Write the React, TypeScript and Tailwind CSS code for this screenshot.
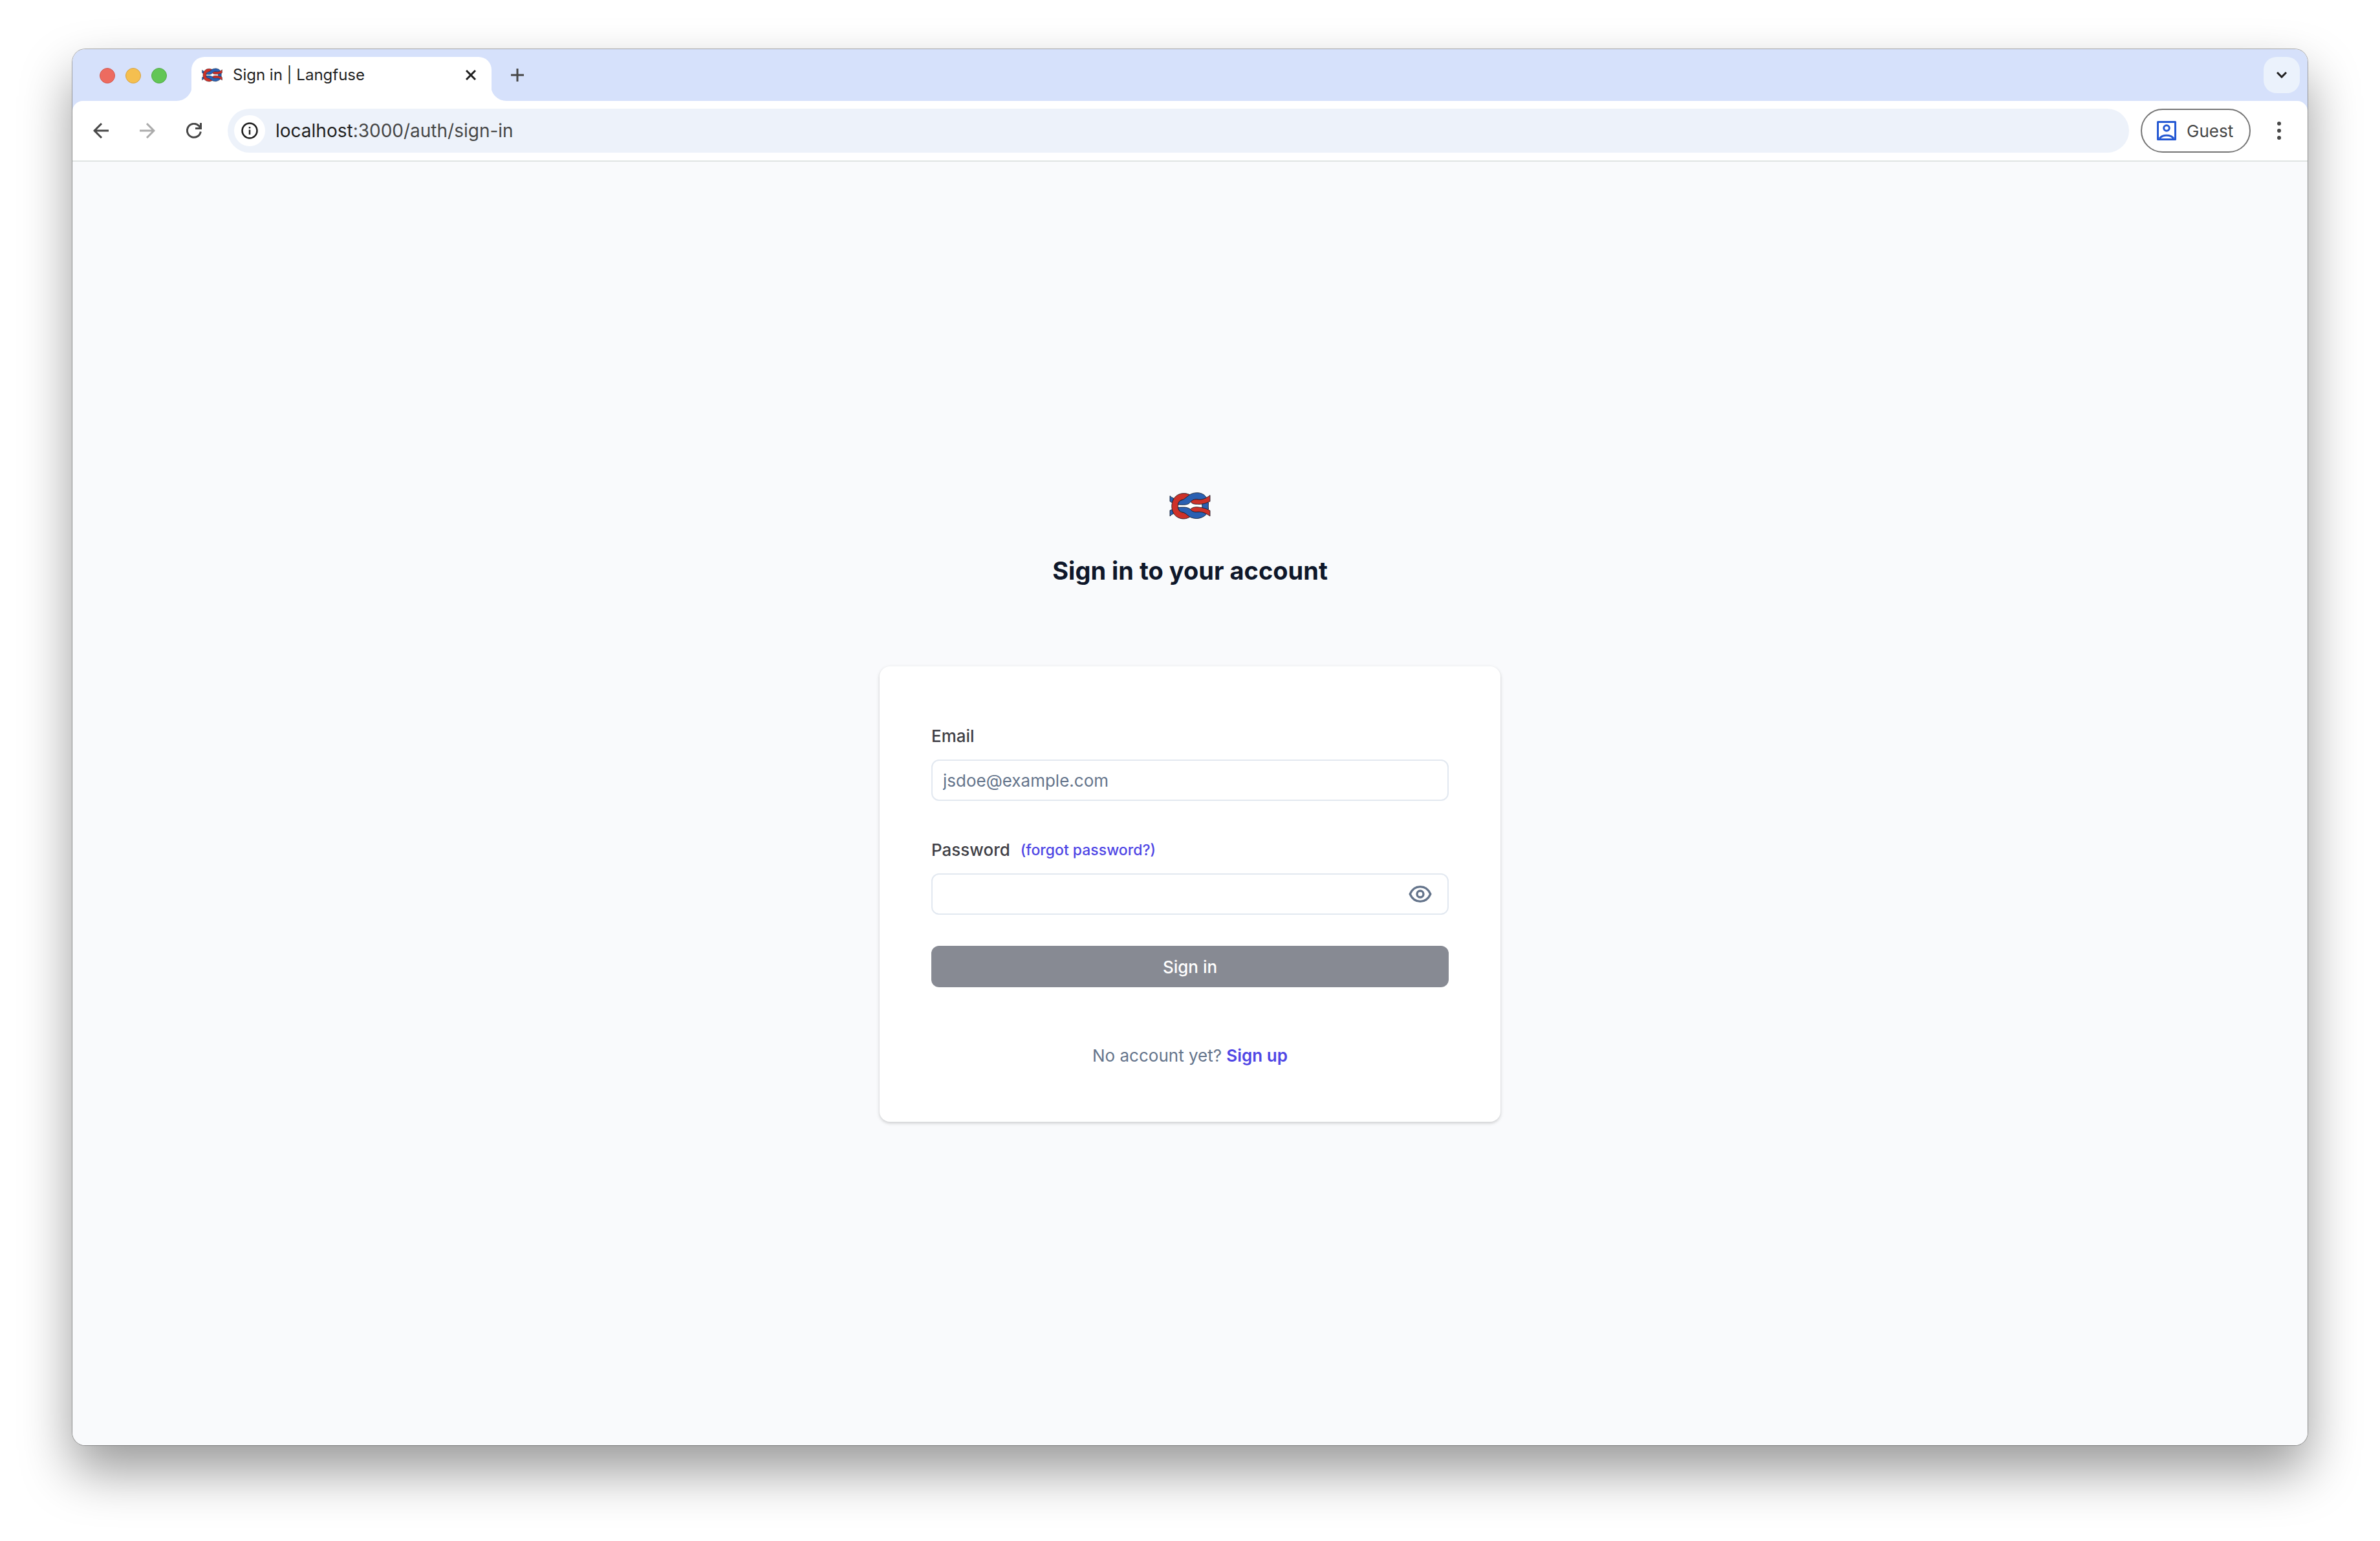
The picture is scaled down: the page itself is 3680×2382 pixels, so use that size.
import React from "react";

function KnotLogo({ className }: { className?: string }) {
  return (
    <svg viewBox="83 62 194 128" className={className} aria-hidden="true" stroke="#111827" strokeWidth="2.500" strokeLinejoin="round">
      <path d="M86 79Q93 87 103 90L99 112L86 105Z" fill="#2a60b2" />
      <path d="M86 174Q93 166 103 162L99 142L86 147Z" fill="#2a60b2" />
      <path d="M124 120H238V134H124Z" fill="#fff" stroke="none" />
      <path d="M176 121Q190 112 212 118H238V136H212Q190 140 176 131Z" fill="#fff" stroke="none" />
      <path d="M186 78C168 64 138 64 120 76C86 98 86 158 120 178C138 190 166 190 184 174L150 156C134 158 124 148 124 128C124 106 134 96 150 98Z" fill="#cd3129" />
      <path d="M124 120C125 108 132 101 144 98C154 95 162 86 170 80C186 66 206 63 222 65C240 68 250 76 256 86C262 94 266 106 266 118H238C238 104 226 96 212 96C194 96 186 104 178 112C168 122 152 122 124 120Z" fill="#2a60b2" />
      <path d="M124 133C126 146 132 152 144 155C156 158 164 166 172 172C186 184 206 187 222 184C240 180 250 172 256 166C262 158 266 148 266 136H238C238 148 226 154 212 153C194 152 188 144 176 138C164 131 150 132 124 133Z" fill="#2a60b2" />
      <path d="M237 110H266V144H237Z" fill="#2a60b2" stroke="none" />
      <path d="M237 112V142M266 112V142" fill="none" />
      <path d="M184 106C192 96 204 94 218 96C240 98 256 90 274 76V105C254 114 236 120 214 118C198 118 188 116 184 106Z" fill="#cd3129" />
      <path d="M182 143C190 132 204 130 220 132C240 134 256 138 274 148V174C256 162 240 152 216 154C198 156 190 152 182 143Z" fill="#cd3129" />
    </svg>
  );
}

function TabStrip() {
  return (
    <div className="flex h-20 items-end bg-[#d6e1fb]">
      <div className="flex h-[78px] items-center gap-4 pr-[15px] pl-[42px]">
        <span className="size-6 rounded-full border border-[#d35a50] bg-[#ed6b60]" />
        <span className="size-6 rounded-full border border-[#d6a243] bg-[#f5bf4f]" />
        <span className="size-6 rounded-full border border-[#53a946] bg-[#62c655]" />
      </div>
      <svg viewBox="0 0 22 22" className="-mr-px size-6 text-white" aria-hidden="true">
        <path d="M22 0V22H0A22 22 0 0 0 22 0Z" fill="currentColor" />
      </svg>
      <div className="flex h-[68px] w-[464px] items-center rounded-t-[20px] bg-white px-4 pb-3">
        <KnotLogo className="h-[22px] w-8" />
        <span className="ml-4 flex-1 text-[24px] text-[#1f1f1f]">Sign in | Langfuse</span>
        <button type="button" aria-label="Close tab" className="mr-2 text-[#1f1f1f]">
          <svg viewBox="0 0 16 16" className="size-4" fill="none" stroke="currentColor" strokeWidth="3" aria-hidden="true">
            <path d="M1 1L15 15M15 1L1 15" />
          </svg>
        </button>
      </div>
      <svg viewBox="0 0 22 22" className="-ml-px size-6 text-white" aria-hidden="true">
        <path d="M0 0V22H22A22 22 0 0 1 0 0Z" fill="currentColor" />
      </svg>
      <button type="button" aria-label="New tab" className="ml-[7px] flex h-20 items-center text-[#474747]">
        <svg viewBox="0 0 20 20" className="size-5" fill="none" stroke="currentColor" strokeWidth="3" aria-hidden="true">
          <path d="M10 0V20M0 10H20" />
        </svg>
      </button>
      <button
        type="button"
        aria-label="Search tabs"
        className="mr-3 mb-3 ml-auto flex size-14 items-center justify-center rounded-[20px] bg-[#ebf2fc] text-[#1f1f1f]"
      >
        <svg viewBox="0 0 16 10" className="h-2.5 w-4" fill="none" stroke="currentColor" strokeWidth="3" aria-hidden="true">
          <path d="M1 1L8 8L15 1" />
        </svg>
      </button>
    </div>
  );
}

function Toolbar() {
  return (
    <div className="bg-[#d6e1fb]">
      <div className="flex h-[94px] items-center rounded-t-2xl border-b-2 border-[#e0e4e3] bg-white">
        <div className="flex w-60 items-center pl-8 text-[#474747]">
          <button type="button" aria-label="Back">
            <svg viewBox="0 0 24 24" className="size-6" fill="none" stroke="currentColor" strokeWidth="3" aria-hidden="true">
              <path d="M24 12H2M13 1L2 12L13 23" />
            </svg>
          </button>
          <button type="button" aria-label="Forward" disabled className="ml-12 text-[#ababab]">
            <svg viewBox="0 0 24 24" className="size-6" fill="none" stroke="currentColor" strokeWidth="3" aria-hidden="true">
              <path d="M0 12H22M11 1L22 12L11 23" />
            </svg>
          </button>
          <button type="button" aria-label="Reload" className="ml-12">
            <svg viewBox="0 0 24 24" className="size-6" fill="none" stroke="currentColor" strokeWidth="3" aria-hidden="true">
              <path d="M22.300 13.500A10.500 10.500 0 1 1 19.500 4.500L22 8" />
              <path d="M22.500 0V8.500H14" />
            </svg>
          </button>
        </div>
        <div className="flex h-[68px] flex-1 items-center rounded-full bg-[#edf2fa] pl-2.5">
          <button type="button" aria-label="View site information" className="flex size-12 items-center justify-center rounded-full bg-white text-[#1f1f1f]">
            <svg viewBox="0 0 26 26" className="size-[26px]" fill="none" stroke="currentColor" strokeWidth="2.500" aria-hidden="true">
              <circle cx="13" cy="13" r="11.500" />
              <path d="M13 11.500V19M13 7V9.500" />
            </svg>
          </button>
          <div className="ml-4 text-[28px] text-[#474747]">
            <span className="text-[#1f1f1f]">localhost</span>:3000/auth/sign-in
          </div>
        </div>
        <button type="button" className="ml-[18px] flex h-[68px] w-[170px] items-center gap-4 rounded-full border-2 border-[#757575] pl-[23px] text-[26px] text-[#474747]">
          <svg viewBox="0 0 30 30" className="size-[30px] text-[#2458d3]" fill="none" stroke="currentColor" strokeWidth="3" strokeLinejoin="round" aria-hidden="true">
            <path d="M1.500 1.500H28.500V28.500H1.500Z" />
            <circle cx="15" cy="11" r="4.300" />
            <path d="M4 27C9 20.500 21 20.500 26 27" />
          </svg>
          Guest
        </button>
        <button type="button" aria-label="Menu" className="mx-10 text-[#474747]">
          <svg viewBox="0 0 8 28" className="h-7 w-2" fill="currentColor" aria-hidden="true">
            <circle cx="4" cy="3" r="3" />
            <circle cx="4" cy="14" r="3" />
            <circle cx="4" cy="25" r="3" />
          </svg>
        </button>
      </div>
    </div>
  );
}

function SignInForm() {
  return (
    <form className="mt-[116px] flex w-[960px] flex-col rounded-2xl bg-white px-20 pt-20 pb-[82px] shadow-[0_2px_6px_rgba(0,0,0,0.1),0_2px_4px_rgba(0,0,0,0.1)]">
      <label htmlFor="email" className="pt-2 text-[26px] leading-[40px] font-medium text-[#3f3f46]">
        Email
      </label>
      <input
        id="email"
        type="email"
        placeholder="jsdoe@example.com"
        className="mt-4 h-16 w-full rounded-xl border-2 border-[#e2e8f0] px-4 text-[26px] placeholder:text-[#64748b]"
      />
      <div className="mt-14 flex items-center gap-4 leading-[40px] font-medium">
        <label htmlFor="password" className="text-[26px] text-[#3f3f46]">
          Password
        </label>
        <a href="#forgot" className="text-[23px] text-[#4f46e5]">
          (forgot password?)
        </a>
      </div>
      <div className="mt-4 flex h-16 items-center rounded-xl border-2 border-[#e2e8f0] pr-[22px]">
        <input id="password" type="password" className="h-full min-w-0 flex-1 px-4 text-[26px] outline-none" />
        <button type="button" aria-label="Show password" className="text-[#64748b]">
          <svg viewBox="0 0 24 24" className="size-10" fill="none" stroke="currentColor" strokeWidth="2" strokeLinecap="round" strokeLinejoin="round" aria-hidden="true">
            <path d="M2.500 12C4.500 7.500 8 5.200 12 5.200S19.500 7.500 21.500 12C19.500 16.500 16 18.800 12 18.800S4.500 16.500 2.500 12Z" />
            <circle cx="12" cy="12" r="3" />
          </svg>
        </button>
      </div>
      <button type="submit" disabled className="mt-12 h-16 rounded-xl bg-[#878a93] text-[26px] font-medium text-white">
        Sign in
      </button>
      <p className="mt-[86px] text-center text-[26px] leading-[40px] text-[#64748b]">
        No account yet?{" "}
        <a href="#signup" className="font-semibold text-[#4f46e5]">
          Sign up
        </a>
      </p>
    </form>
  );
}

export default function App() {
  return (
    <div className="flex min-h-screen bg-white px-28 pt-[76px] pb-[148px] font-['Inter',sans-serif]">
      <div className="flex flex-1 flex-col overflow-hidden rounded-[20px] shadow-[0_40px_80px_rgba(0,0,0,0.4),0_0_0_1px_rgba(0,0,0,0.3)]">
        <TabStrip />
        <Toolbar />
        <main className="flex flex-1 flex-col items-center justify-center bg-[#f9fafc]">
          <KnotLogo className="size-16" />
          <h1 className="mt-9 text-[38px] leading-[64px] font-bold text-[#0f172a]">Sign in to your account</h1>
          <SignInForm />
        </main>
      </div>
    </div>
  );
}
